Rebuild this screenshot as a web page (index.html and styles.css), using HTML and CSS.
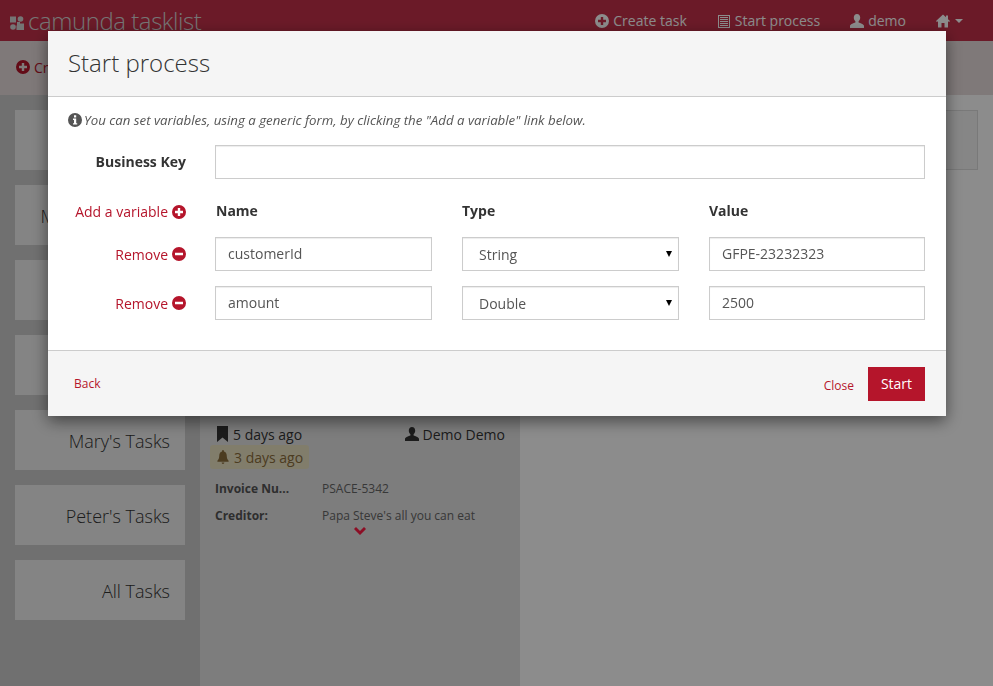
FILE: index.html
```html
<!DOCTYPE html>
<html>
<head>
    <title>Camunda Tasklist</title>
    <link rel="stylesheet" href="styles.css">
</head>
<body>
    <svg class="icon-defs">
        <symbol id="i-plus" viewBox="0 0 14 14"><path fill-rule="evenodd" d="M7 0a7 7 0 1 0 0 14A7 7 0 0 0 7 0zM5.800 3h2.400v2.800H11v2.400H8.200V11H5.800V8.200H3V5.800h2.800z"/></symbol>
        <symbol id="i-minus" viewBox="0 0 14 14"><path fill-rule="evenodd" d="M7 0a7 7 0 1 0 0 14A7 7 0 0 0 7 0zM3 5.800h8v2.400H3z"/></symbol>
        <symbol id="i-info" viewBox="0 0 14 14"><path fill-rule="evenodd" d="M7 0a7 7 0 1 0 0 14A7 7 0 0 0 7 0zM6 2.300h2.200v2.100H6zM5 5.600h3.200v4.600h1v1.400H5v-1.400h1V7H5z"/></symbol>
        <symbol id="i-list" viewBox="0 0 14 14"><path fill-rule="evenodd" d="M1 1h12v13H1zM2 2v11h10V2zM3 3h8v1H3zM3 5h8v1H3zM3 7h8v1H3zM3 9h8v1H3zM3 11h8v1H3z"/></symbol>
        <symbol id="i-user" viewBox="0 0 14 14"><path d="M7 0c2 0 3.200 1.500 3.200 3.600 0 1.600-.7 3-1.600 3.700v1.100c1.800.7 5.200 1.600 5.400 3.400V14H0v-2.200c.2-1.800 3.600-2.700 5.400-3.400V7.300c-.9-.7-1.600-2.100-1.600-3.700C3.800 1.500 5 0 7 0z"/></symbol>
        <symbol id="i-home" viewBox="0 0 14 14"><path d="M7 .5l3 2.800V1.500h2v3.700l2 1.900-.9 1L12 7.200V13.500H8.500V9h-3v4.500H2V7.200L.9 8.100 0 7.100z"/></symbol>
        <symbol id="i-bookmark" viewBox="0 0 11 16"><path d="M0 0h11v16L5.500 11.500 0 16z"/></symbol>
        <symbol id="i-bell" viewBox="0 0 14 15"><path d="M7 0c.6 0 1 .4 1 1v.6c2 .5 3 2.200 3 4.400 0 3 .8 4.500 2 5.500v1H1v-1c1.200-1 2-2.500 2-5.500 0-2.200 1-3.900 3-4.400V1c0-.6.4-1 1-1zM5.500 13.500h3A1.500 1.500 0 0 1 7 15a1.500 1.500 0 0 1-1.500-1.500z"/></symbol>
        <symbol id="i-chevron" viewBox="0 0 12 8"><path d="M0 2l2-2 4 4 4-4 2 2-6 6z"/></symbol>
        <symbol id="i-logo" viewBox="0 0 14 14"><path d="M0 .5h6v6H0z"/><circle cx="10.500" cy="3" r="2.800"/><circle cx="3" cy="11" r="2.800"/><path d="M7 6h3v1.500h4V14H6.500V9.500H7z"/></symbol>
    </svg>

    <div class="page">
        <header class="topbar">
            <a class="brand">
                <svg class="logo"><use href="#i-logo"/></svg>
                <span>camunda tasklist</span>
            </a>
            <nav class="topnav">
                <a><svg class="icon"><use href="#i-plus"/></svg>Create task</a>
                <a><svg class="icon"><use href="#i-list"/></svg>Start process</a>
                <a><svg class="icon"><use href="#i-user"/></svg>demo</a>
                <a class="home"><svg class="icon"><use href="#i-home"/></svg><span class="caret"></span></a>
            </nav>
        </header>

        <div class="toolbar">
            <a><svg class="icon"><use href="#i-plus"/></svg>Create a filter</a>
        </div>

        <div class="columns">
            <aside class="filters">
                <a class="filter">My Tasks</a>
                <a class="filter">My Group Tasks</a>
                <a class="filter">Accounting</a>
                <a class="filter">John's Tasks</a>
                <a class="filter">Mary's Tasks</a>
                <a class="filter">Peter's Tasks</a>
                <a class="filter">All Tasks</a>
            </aside>

            <section class="tasks">
                <div class="task-meta">
                    <span class="created"><svg class="icon-bookmark"><use href="#i-bookmark"/></svg>5 days ago</span>
                    <span class="assignee"><svg class="icon"><use href="#i-user"/></svg>Demo Demo</span>
                </div>
                <div class="due"><svg class="icon"><use href="#i-bell"/></svg>3 days ago</div>
                <div class="task-var">
                    <b>Invoice Nu...</b>
                    <span>PSACE-5342</span>
                </div>
                <div class="task-var">
                    <b>Creditor:</b>
                    <span>Papa Steve's all you can eat</span>
                </div>
                <svg class="more"><use href="#i-chevron"/></svg>
            </section>

            <main class="detail">
                <div class="detail-box"></div>
            </main>
        </div>
    </div>

    <div class="backdrop"></div>

    <div class="modal">
        <div class="modal-header">
            <h3>Start process</h3>
        </div>
        <div class="modal-body">
            <p class="hint"><svg class="icon"><use href="#i-info"/></svg>You can set variables, using a generic form, by clicking the "Add a variable" link below.</p>

            <div class="form-row key-row">
                <label>Business Key</label>
                <input class="input key-input" type="text">
            </div>

            <div class="form-row var-head">
                <a class="var-action">Add a variable<svg class="icon"><use href="#i-plus"/></svg></a>
                <b class="var-name">Name</b>
                <b>Type</b>
                <b>Value</b>
            </div>

            <div class="form-row var-row">
                <a class="var-action">Remove<svg class="icon"><use href="#i-minus"/></svg></a>
                <input class="input" type="text" value="customerId">
                <div class="select-wrap">
                    <select class="input select">
                        <option>String</option>
                        <option>Double</option>
                    </select>
                </div>
                <input class="input" type="text" value="GFPE-23232323">
            </div>

            <div class="form-row var-row">
                <a class="var-action">Remove<svg class="icon"><use href="#i-minus"/></svg></a>
                <input class="input" type="text" value="amount">
                <div class="select-wrap">
                    <select class="input select">
                        <option>Double</option>
                        <option>String</option>
                    </select>
                </div>
                <input class="input" type="text" value="2500">
            </div>
        </div>
        <div class="modal-footer">
            <a class="back">Back</a>
            <a class="close">Close</a>
            <button class="start">Start</button>
        </div>
    </div>
</body>
</html>
```

FILE: styles.css
```css
* {
    box-sizing: border-box;
}
html, body {
    height: 100%;
}
body {
    margin: 0;
    overflow: hidden;
    font-family: "Open Sans", Arial, sans-serif;
    font-size: 14px;
    color: #333;
    background-color: #fff;
}
.icon-defs {
    display: none;
}
.icon {
    width: 14px;
    height: 14px;
    fill: currentColor;
    flex: none;
}

/* page behind the dialog */
.page {
    height: 100%;
    display: flex;
    flex-direction: column;
}
.topbar {
    height: 41px;
    flex: none;
    display: flex;
    align-items: center;
    justify-content: space-between;
    padding: 0 30px 0 10px;
    background-color: #c4314a;
    color: #fff;
}
.brand {
    display: flex;
    align-items: center;
    gap: 4px;
    font-size: 24px;
    font-weight: 300;
    letter-spacing: -0.45px;
    color: #d6d6d6;
}
.logo {
    width: 14px;
    height: 14px;
    fill: currentColor;
    margin-top: 5px;
}
.topnav {
    display: flex;
    align-items: center;
    gap: 30px;
}
.topnav a {
    display: flex;
    align-items: center;
    gap: 4px;
}
.topnav .home {
    gap: 5px;
}
.caret {
    border-top: 4px solid #fff;
    border-left: 4px solid transparent;
    border-right: 4px solid transparent;
}
.toolbar {
    height: 54px;
    flex: none;
    display: flex;
    align-items: center;
    padding: 0 0 2px 16px;
    background-color: #e8dddd;
    color: #b5152b;
}
.toolbar a {
    display: flex;
    align-items: center;
    gap: 4px;
}
.columns {
    flex: 1;
    display: flex;
    min-height: 0;
}
.filters {
    width: 200px;
    padding: 15px;
    display: flex;
    flex-direction: column;
    gap: 15px;
    background-color: #cdcdcd;
}
.filter {
    height: 60px;
    display: flex;
    align-items: center;
    justify-content: flex-end;
    padding: 2px 15px 0 0;
    background-color: #f0f0f0;
    font-size: 18px;
    font-weight: 300;
}
.tasks {
    position: relative;
    width: 320px;
    padding: 330px 15px 0 15px;
    background-color: #e3e3e3;
}
.task-meta {
    display: flex;
    justify-content: space-between;
    align-items: center;
    height: 18px;
    padding-left: 2px;
}
.created, .assignee {
    display: flex;
    align-items: center;
    gap: 5px;
}
.assignee {
    gap: 4px;
}
.icon-bookmark {
    width: 11px;
    height: 16px;
    fill: currentColor;
}
.due {
    display: inline-flex;
    align-items: center;
    gap: 4px;
    height: 24px;
    margin: 2px 0 0 -5px;
    padding: 0 6px;
    border-radius: 3px;
    background-color: #ece4c4;
    color: #8a6d3b;
}
.task-var {
    display: flex;
    font-size: 12px;
    margin-top: 10px;
    line-height: 17px;
    color: #666;
}
.due + .task-var {
    margin-top: 11px;
}
.task-var b {
    width: 107px;
    color: #555;
}
.more {
    position: absolute;
    left: 154px;
    top: 432px;
    width: 12px;
    height: 8px;
    fill: #ff1a44;
}
.detail {
    flex: 1;
    padding: 15px;
}
.detail-box {
    height: 60px;
    border: 1px solid #ddd;
    background-color: #f5f5f5;
}

/* dialog */
.backdrop {
    position: fixed;
    inset: 0;
    background-color: rgba(0,0,0,0.45);
}
.modal {
    position: fixed;
    left: 48px;
    top: 31px;
    width: 898px;
    height: 385px;
    display: flex;
    flex-direction: column;
    background-color: #fff;
    box-shadow: 0 5px 15px rgba(0,0,0,0.5);
}
.modal-header {
    height: 66px;
    flex: none;
    padding: 0 20px;
    display: flex;
    align-items: center;
    background-color: #f5f5f5;
    border-bottom: 1px solid #ccc;
}
.modal-header h3 {
    margin: 0 0 2px 0;
    font-size: 24px;
    font-weight: 300;
    color: #333;
}
.modal-body {
    flex: 1;
    padding: 14px 21px 0 20px;
}
.hint {
    margin: 0;
    display: flex;
    align-items: center;
    gap: 2px;
    height: 18px;
    font-size: 13.25px;
    font-style: italic;
    color: #555;
}
.form-row {
    display: grid;
    grid-template-columns: 117px 217px 217px 216px;
    column-gap: 30px;
    align-items: center;
}
.form-row label {
    margin: 0 -1px 2px 0;
    font-weight: 700;
    text-align: right;
}
.key-row {
    margin-top: 16px;
}
.key-input {
    grid-column: 2 / 5;
}
.var-head {
    margin-top: 22px;
    height: 20px;
}
.var-head b {
    padding-bottom: 2px;
}
.var-head .var-name {
    padding-left: 1px;
}
.var-row {
    margin-top: 15px;
}
.var-head + .var-row {
    margin-top: 16px;
}
.var-action {
    display: flex;
    align-items: center;
    justify-content: flex-end;
    gap: 4px;
    margin-right: -1px;
    color: #b5152b;
}
.input {
    width: 100%;
    height: 34px;
    padding: 0 12px 2px 12px;
    border: 1px solid #ccc;
    border-radius: 0;
    background-color: #fff;
    box-shadow: inset 0 1px 1px rgba(0,0,0,0.075);
    font-family: inherit;
    font-size: 14px;
    color: #555;
}
.select-wrap {
    position: relative;
}
.select-wrap::after {
    content: "";
    position: absolute;
    right: 7px;
    top: 14px;
    border-top: 6px solid #000;
    border-left: 3px solid transparent;
    border-right: 3px solid transparent;
}
.select {
    appearance: none;
    padding: 0 16px 0 16px;
}
.modal-footer {
    height: 66px;
    flex: none;
    display: flex;
    align-items: center;
    padding: 0 21px 0 26px;
    background-color: #f5f5f5;
    border-top: 1px solid #ccc;
    font-size: 12px;
    color: #b5152b;
}
.back {
    margin-right: auto;
}
.close {
    margin: 4px 14px 0 0;
}
.start {
    width: 57px;
    height: 34px;
    border: none;
    background-color: #b5152b;
    color: white;
    font-family: inherit;
    font-size: 14px;
}
```
